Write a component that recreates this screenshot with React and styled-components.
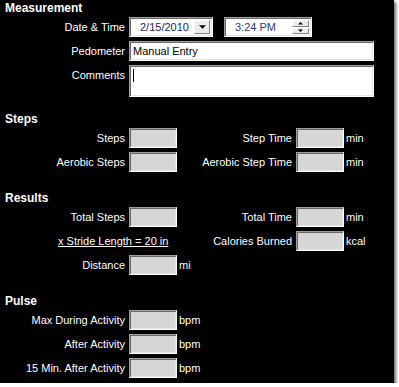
import React from 'react';
import styled, { createGlobalStyle } from 'styled-components';

const GlobalStyle = createGlobalStyle`
  html, body {
    margin: 0;
    padding: 0;
    background: #ffffff;
  }
  body {
    font-family: "Liberation Sans", Arial, sans-serif;
    font-size: 11px;
  }
`;

const Panel = styled.div`
  width: 394px;
  height: 383px;
  box-sizing: border-box;
  padding-top: 1px;
  background: #000;
  color: #fff;
  box-shadow: 2px 2px 3px rgba(0, 0, 0, 0.6);
  display: flex;
  flex-direction: column;
`;

const Section = styled.section`
  margin-top: ${(p) => p.$top || 0}px;
  display: flex;
  flex-direction: column;
`;

const Header = styled.h2`
  margin: 0 0 2px 5px;
  font-size: 12px;
  line-height: 14px;
  font-weight: bold;
`;

const Rows = styled.div`
  display: flex;
  flex-direction: column;
  gap: 4px;
`;

const Row = styled.div`
  display: flex;
  align-items: ${(p) => (p.$top ? 'flex-start' : 'center')};
  height: ${(p) => p.$h || 20}px;
`;

const Field = styled.div`
  display: flex;
  align-items: inherit;
  height: 100%;
  width: ${(p) => (p.$w ? `${p.$w}px` : 'auto')};
  flex: ${(p) => (p.$w ? 'none' : '1')};
`;

const Label = styled.label`
  width: ${(p) => p.$w}px;
  margin-right: 4px;
  text-align: right;
  white-space: nowrap;
  line-height: 20px;
  flex: none;
`;

const Sunken = styled.div`
  box-sizing: border-box;
  height: 100%;
  border: 1px solid;
  border-color: #a0a0a0 #ffffff #ffffff #a0a0a0;
  box-shadow: inset 1px 1px 0 #696969, inset -1px -1px 0 #e3e3e3;
  color: #000;
`;

const NumBox = styled(Sunken)`
  width: 48px;
  background: #d6d6d6;
  flex: none;
`;

const TextBox = styled(Sunken)`
  width: 245px;
  background: #fff;
  padding: 2px 3px;
  line-height: 15px;
`;

const Caret = styled.span`
  display: inline-block;
  width: 1px;
  height: 13px;
  background: #000;
  margin-top: 1px;
`;

const Unit = styled.span`
  margin-left: 2px;
  line-height: 20px;
`;

const Stride = styled.a`
  color: #fff;
  text-decoration: underline;
  padding-left: 58px;
  line-height: 20px;
  white-space: nowrap;
`;

const Picker = styled(Sunken)`
  width: ${(p) => p.$w}px;
  background: #fff;
  display: flex;
  align-items: center;
  justify-content: space-between;
  padding: 2px;
  margin-right: ${(p) => p.$mr || 0}px;
  color: ${(p) => p.$color};
`;

const PickerText = styled.span`
  padding-left: ${(p) => p.$pl}px;
  line-height: 14px;
`;

const DropButton = styled.div`
  width: 16px;
  height: 100%;
  box-sizing: border-box;
  background: #ececec;
  border: 1px solid;
  border-color: #fff #808080 #808080 #fff;
  display: flex;
  align-items: center;
  justify-content: center;
`;

const Spin = styled.div`
  width: 17px;
  height: 100%;
  display: flex;
  flex-direction: column;
  gap: 1px;
`;

const SpinButton = styled(DropButton)`
  width: 100%;
  flex: 1;
  height: auto;
`;

const Tri = ({ up, size = 7 }) => (
  <svg width={size} height={Math.ceil(size / 2) + 1} viewBox="0 0 8 5">
    {up ? <polygon points="0,5 8,5 4,1" fill="#000" /> : <polygon points="0,0 8,0 4,4" fill="#000" />}
  </svg>
);

const NumField = ({ label, unit, lw = 125, w }) => (
  <Field $w={w}>
    <Label $w={lw}>{label}</Label>
    <NumBox />
    {unit && <Unit>{unit}</Unit>}
  </Field>
);

export default function App() {
  return (
    <>
      <GlobalStyle />
      <Panel>
        <Section>
          <Header>Measurement</Header>
          <Rows>
            <Row>
              <Label $w={125}>Date &amp; Time</Label>
              <Picker $w={84} $mr={11} $color="#1b1f4d">
                <PickerText $pl={8}>2/15/2010</PickerText>
                <DropButton>
                  <Tri />
                </DropButton>
              </Picker>
              <Picker $w={88} $color="#2b3a7c">
                <PickerText $pl={8}>3:24 PM</PickerText>
                <Spin>
                  <SpinButton>
                    <Tri up size={5} />
                  </SpinButton>
                  <SpinButton>
                    <Tri size={5} />
                  </SpinButton>
                </Spin>
              </Picker>
            </Row>
            <Row>
              <Label $w={125}>Pedometer</Label>
              <TextBox>Manual Entry</TextBox>
            </Row>
            <Row $h={32} $top>
              <Label $w={125}>Comments</Label>
              <TextBox>
                <Caret />
              </TextBox>
            </Row>
          </Rows>
        </Section>

        <Section $top={15}>
          <Header>Steps</Header>
          <Rows>
            <Row>
              <NumField label="Steps" w={180} />
              <NumField label="Step Time" lw={112} unit="min" />
            </Row>
            <Row>
              <NumField label="Aerobic Steps" w={180} />
              <NumField label="Aerobic Step Time" lw={112} unit="min" />
            </Row>
          </Rows>
        </Section>

        <Section $top={19}>
          <Header>Results</Header>
          <Rows>
            <Row>
              <NumField label="Total Steps" w={180} />
              <NumField label="Total Time" lw={112} unit="min" />
            </Row>
            <Row>
              <Field $w={180}>
                <Stride href="#">x Stride Length = 20 in</Stride>
              </Field>
              <NumField label="Calories Burned" lw={112} unit="kcal" />
            </Row>
            <Row>
              <NumField label="Distance" unit="mi" />
            </Row>
          </Rows>
        </Section>

        <Section $top={19}>
          <Header>Pulse</Header>
          <Rows>
            <Row>
              <NumField label="Max During Activity" unit="bpm" />
            </Row>
            <Row>
              <NumField label="After Activity" unit="bpm" />
            </Row>
            <Row>
              <NumField label="15 Min. After Activity" unit="bpm" />
            </Row>
          </Rows>
        </Section>
      </Panel>
    </>
  );
}
